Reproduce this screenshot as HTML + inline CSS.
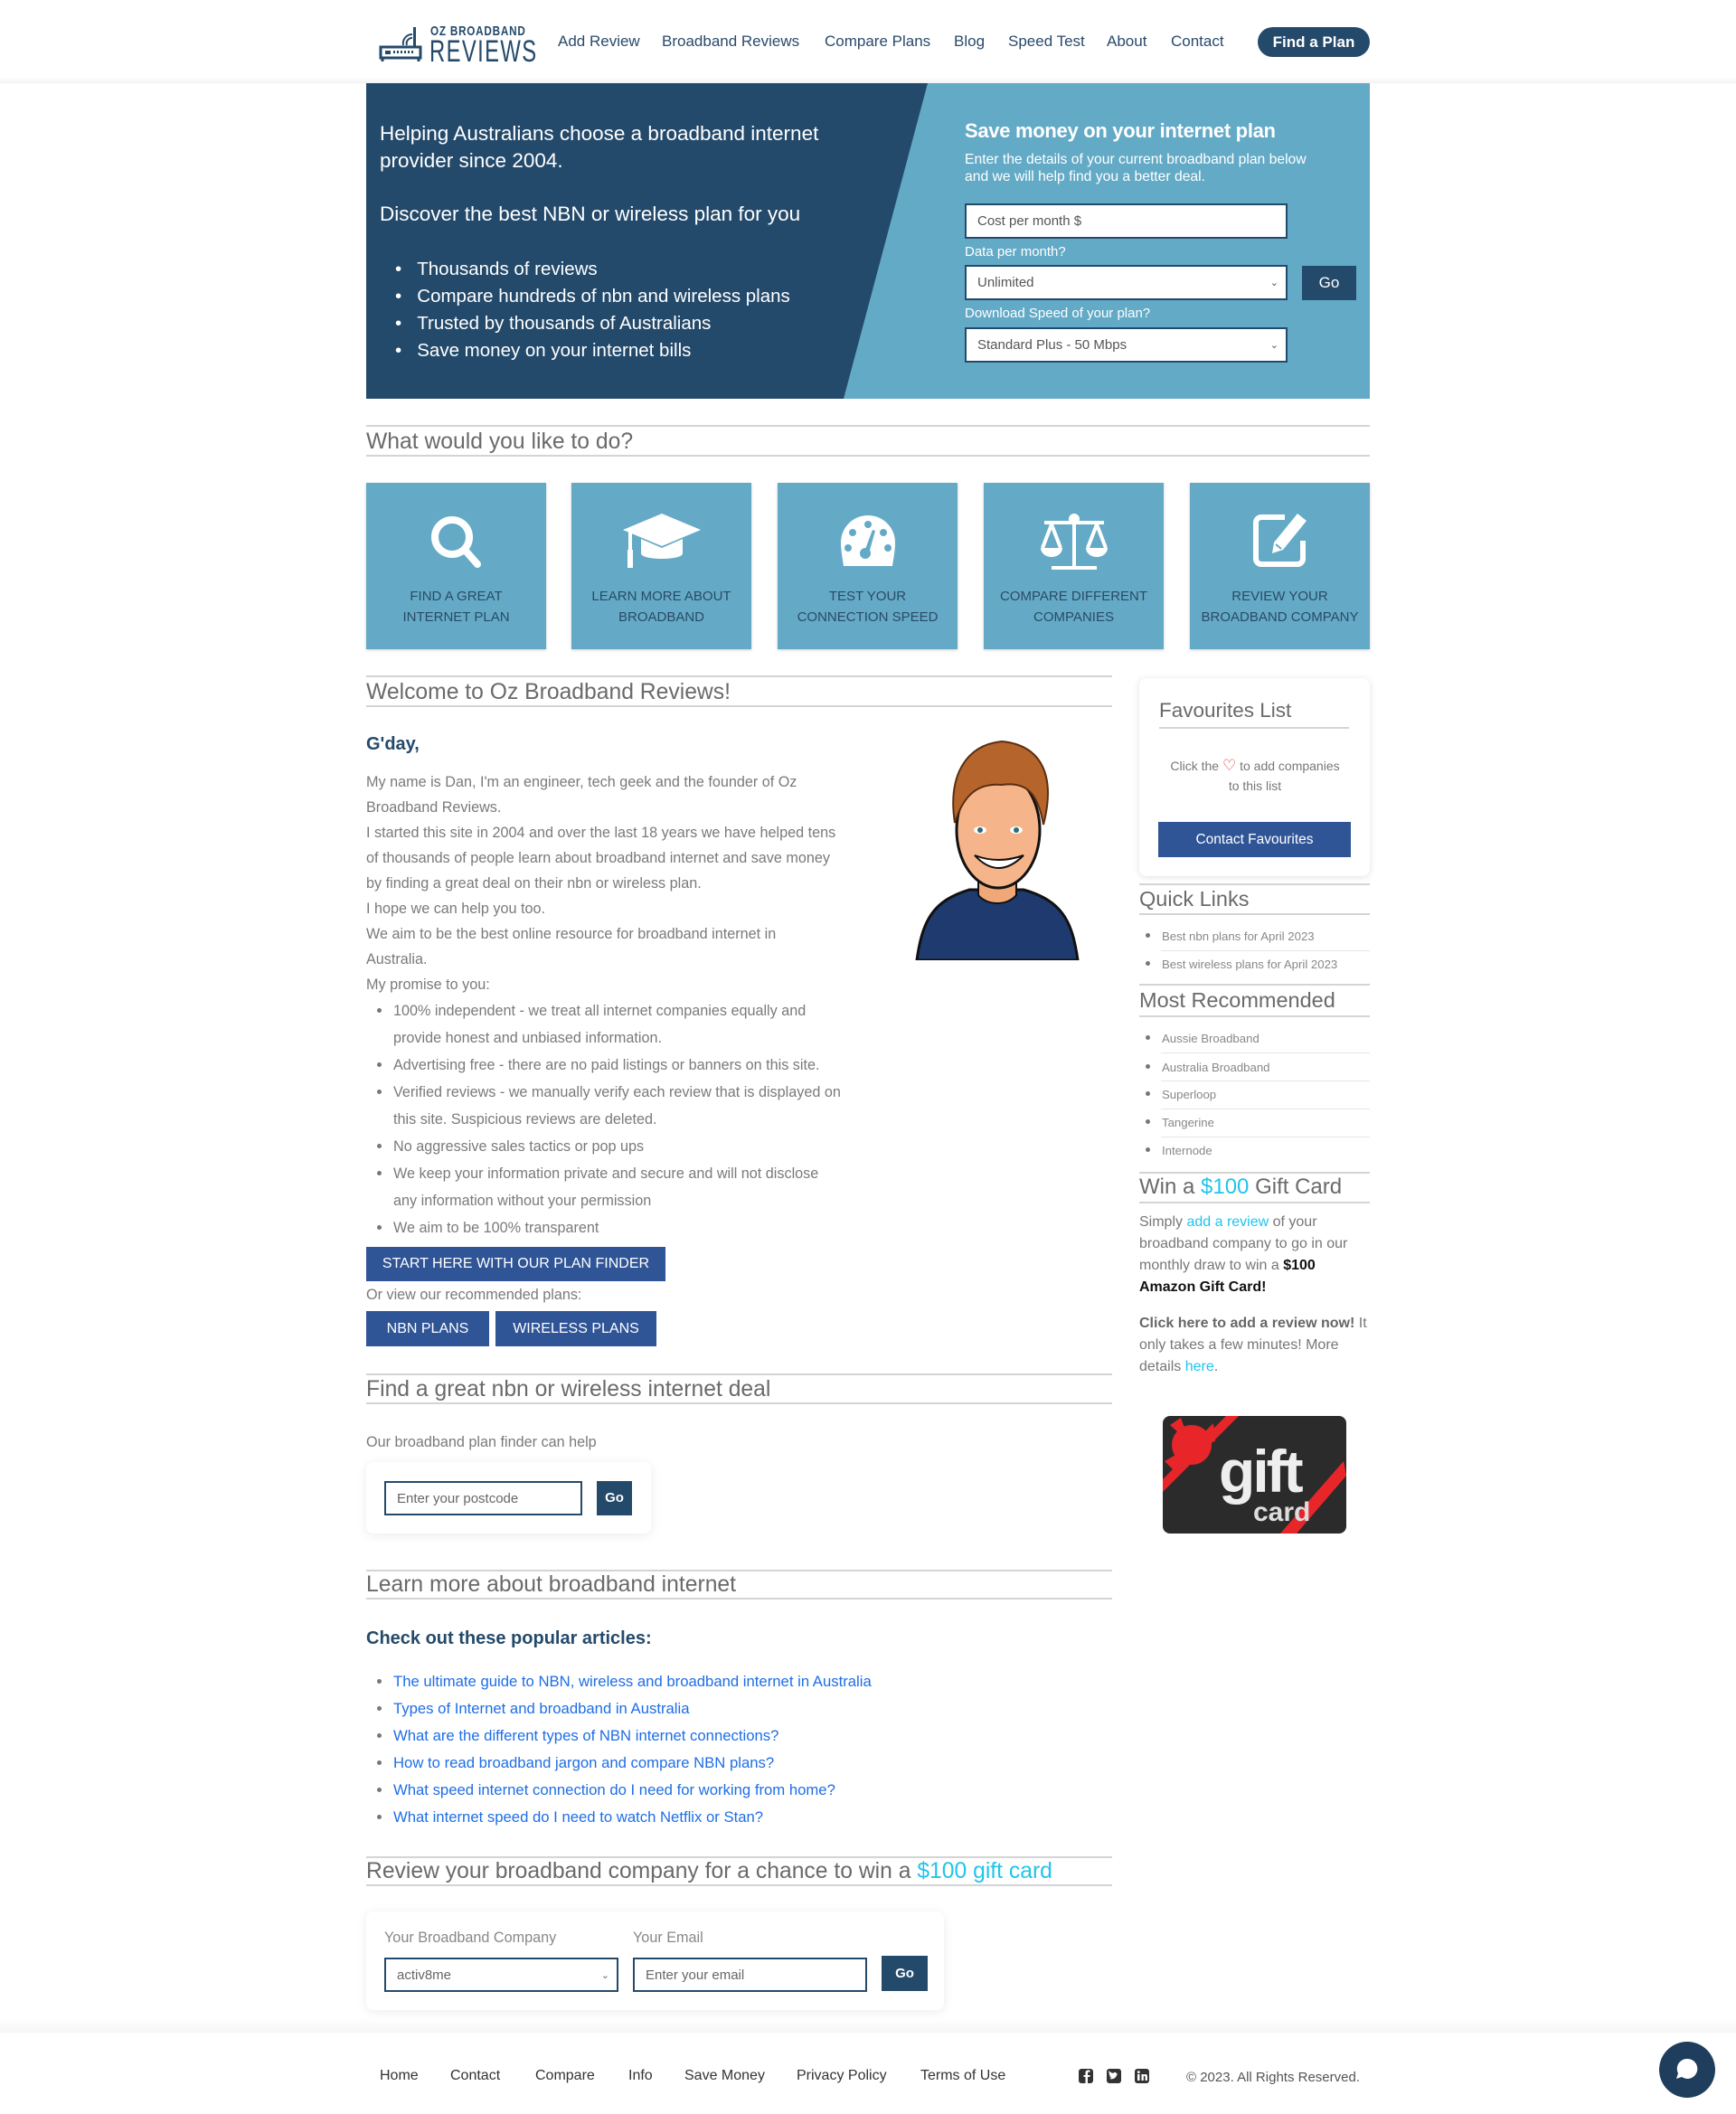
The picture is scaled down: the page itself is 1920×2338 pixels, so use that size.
<!DOCTYPE html>
<html><head><meta charset="utf-8"><style>
*{margin:0;padding:0;box-sizing:border-box}
body{width:1920px;height:2338px;position:relative;background:#fff;font-family:"Liberation Sans",sans-serif;overflow:hidden}
.a{position:absolute;white-space:nowrap}
.nav{font-size:17px;color:#2a4a6b;top:35px;line-height:22px}
.hl{position:absolute;height:2px;background:#d4d4d4}
.h2{position:absolute;font-size:24.7px;color:#6a6a6a;line-height:30px;white-space:nowrap}
.tile{position:absolute;top:534px;width:199px;height:184px;background:#64aac6;box-shadow:0 1px 3px rgba(0,0,0,.2);text-align:center;color:#2a4a66;font-size:15px;line-height:23px}
.tile svg{position:absolute;left:50%;transform:translateX(-50%);top:30px}
.tile div{position:absolute;left:0;right:0;top:114px}
.p{position:absolute;font-size:16.2px;color:#7a7a7a;white-space:nowrap;line-height:20px}
.dot{position:absolute;width:6px;height:6px;border-radius:50%;background:#777}
.btn{position:absolute;background:#2f5597;color:#fff;font-size:16px;text-align:center}
.sb{position:absolute;font-size:13.2px;color:#888;white-space:nowrap;line-height:16px}
.sl{position:absolute;height:1px;background:#e6e6e6;left:1284px;width:231px}
.field{position:absolute;border:3px solid #244a6b;background:#fff;font-size:15px;color:#555;padding-left:12px;display:flex;align-items:center}
.ft{position:absolute;top:2286px;font-size:16px;color:#333;line-height:20px}
</style></head><body>

<!-- NAV -->
<svg class="a" style="left:419px;top:28px" width="50" height="42" viewBox="0 0 50 42">
<rect x="2" y="24" width="44" height="12" fill="none" stroke="#244a6b" stroke-width="3"/>
<rect x="7" y="28" width="6" height="4" fill="#244a6b"/>
<g fill="#244a6b"><rect x="16" y="28" width="2" height="3"/><rect x="20" y="28" width="2" height="3"/><rect x="24" y="28" width="2" height="3"/><rect x="28" y="28" width="2" height="3"/><rect x="32" y="28" width="2" height="3"/><rect x="36" y="28" width="2" height="3"/></g>
<rect x="38" y="2" width="3" height="22" fill="#244a6b"/>
<path d="M31 22 a6 6 0 0 1 6 -8 M27 22 a10 10 0 0 1 10 -12" fill="none" stroke="#244a6b" stroke-width="2"/>
<path d="M4 36 v4 M44 36 v4" stroke="#244a6b" stroke-width="3"/>
</svg>
<div class="a" style="left:476px;top:27px;font-size:15px;font-weight:bold;letter-spacing:1px;color:#244a6b;line-height:16px;transform:scaleX(.78);transform-origin:left">OZ BROADBAND</div>
<div class="a" style="left:475px;top:40px;font-size:34px;letter-spacing:2px;color:#244a6b;line-height:34px;transform:scaleX(.7);transform-origin:left">REVIEWS</div>
<div class="a nav" style="left:617px">Add Review</div>
<div class="a nav" style="left:732px">Broadband Reviews</div>
<div class="a nav" style="left:912px">Compare Plans</div>
<div class="a nav" style="left:1055px">Blog</div>
<div class="a nav" style="left:1115px">Speed Test</div>
<div class="a nav" style="left:1224px">About</div>
<div class="a nav" style="left:1295px">Contact</div>
<div class="a" style="left:1391px;top:30px;width:124px;height:33px;border-radius:17px;background:#244a6b;color:#fff;font-size:17px;font-weight:bold;text-align:center;line-height:33px">Find a Plan</div>
<div class="a" style="left:0;top:86px;width:1920px;height:6px;background:linear-gradient(#fff,#f2f2f2)"></div>

<!-- HERO -->
<svg class="a" style="left:405px;top:92px" width="1110" height="349">
<rect width="1110" height="349" fill="#63aac6"/>
<polygon points="0,0 621,0 528,349 0,349" fill="#244a6b"/>
</svg>
<div class="a" style="left:420px;top:133px;font-size:22.5px;color:#fff;line-height:30px">Helping Australians choose a broadband internet<br>provider since 2004.</div>
<div class="a" style="left:420px;top:223px;font-size:22.5px;color:#fff;line-height:28px">Discover the best NBN or wireless plan for you</div>
<div class="a" style="left:437px;top:283px;font-size:20.5px;color:#fff;line-height:30px">
<div>•&nbsp;&nbsp;&nbsp;Thousands of reviews</div><div>•&nbsp;&nbsp;&nbsp;Compare hundreds of nbn and wireless plans</div><div>•&nbsp;&nbsp;&nbsp;Trusted by thousands of Australians</div><div>•&nbsp;&nbsp;&nbsp;Save money on your internet bills</div></div>
<div class="a" style="left:1067px;top:131px;font-size:22px;font-weight:bold;color:#fff;line-height:28px;letter-spacing:-.3px">Save money on your internet plan</div>
<div class="a" style="left:1067px;top:167px;font-size:15.7px;color:#fff;line-height:19px">Enter the details of your current broadband plan below<br>and we will help find you a better deal.</div>
<div class="field" style="left:1067px;top:225px;width:357px;height:39px;border-width:2px">Cost per month $</div>
<div class="a" style="left:1067px;top:270px;font-size:15px;color:#fff">Data per month?</div>
<div class="field" style="left:1067px;top:293px;width:357px;height:39px;border-width:2px">Unlimited<span style="position:absolute;right:8px;font-size:11px">&#8964;</span></div>
<div class="a" style="left:1440px;top:294px;width:60px;height:38px;background:#244a6b;color:#fff;font-size:17px;text-align:center;line-height:38px">Go</div>
<div class="a" style="left:1067px;top:338px;font-size:15px;color:#fff">Download Speed of your plan?</div>
<div class="field" style="left:1067px;top:362px;width:357px;height:39px;border-width:2px">Standard Plus - 50 Mbps<span style="position:absolute;right:8px;font-size:11px">&#8964;</span></div>

<!-- WHAT WOULD YOU LIKE -->
<div class="hl" style="left:405px;width:1110px;top:470px"></div>
<div class="h2" style="left:405px;top:474px">What would you like to do?</div>
<div class="hl" style="left:405px;width:1110px;top:503px"></div>

<div class="tile" style="left:405px"><svg width="70" height="70" viewBox="0 0 70 70"><circle cx="30" cy="30" r="19" fill="none" stroke="#fff" stroke-width="8"/><path d="M44 44 L58 60" stroke="#fff" stroke-width="8" stroke-linecap="round"/></svg><div>FIND A GREAT<br>INTERNET PLAN</div></div>
<div class="tile" style="left:632px"><svg width="90" height="70" viewBox="0 0 90 70"><polygon points="45,4 88,22 45,40 2,22" fill="#fff"/><path d="M22 32 v16 c0 8 46 8 46 0 v-16 l-23 10 z" fill="#fff"/><path d="M10 24 v30" stroke="#fff" stroke-width="4"/><rect x="7" y="44" width="6" height="20" fill="#fff"/></svg><div>LEARN MORE ABOUT<br>BROADBAND</div></div>
<div class="tile" style="left:860px"><svg width="70" height="70" viewBox="0 0 70 70"><path d="M35 6 a30 30 0 0 1 30 30 c0 10 -2 18 -3 26 h-54 c-1 -8 -3 -16 -3 -26 a30 30 0 0 1 30 -30z" fill="#fff"/><g fill="#64aac6"><circle cx="35" cy="16" r="4"/><circle cx="18" cy="25" r="4"/><circle cx="52" cy="25" r="4"/><circle cx="13" cy="42" r="4"/><circle cx="57" cy="42" r="4"/><circle cx="32" cy="48" r="6"/><path d="M31 46 L40 22 L43 23 L36 48z"/></g></svg><div>TEST YOUR<br>CONNECTION SPEED</div></div>
<div class="tile" style="left:1088px"><svg width="90" height="74" viewBox="0 0 90 74"><g stroke="#fff" stroke-width="4" fill="none"><path d="M45 6 v60 M20 64 h50 M12 14 h66"/><circle cx="45" cy="10" r="4" fill="#fff"/><path d="M20 16 L10 42 M20 16 L30 42 M70 16 L60 42 M70 16 L80 42"/></g><path d="M8 42 h24 a12 10 0 0 1 -24 0z M58 42 h24 a12 10 0 0 1 -24 0z" fill="#fff"/></svg><div>COMPARE DIFFERENT<br>COMPANIES</div></div>
<div class="tile" style="left:1316px"><svg width="70" height="70" viewBox="0 0 70 70"><path d="M40 8 H14 a6 6 0 0 0 -6 6 v40 a6 6 0 0 0 6 6 h40 a6 6 0 0 0 6 -6 V34" fill="none" stroke="#fff" stroke-width="6"/><path d="M54 4 L64 12 L38 44 L26 48 L28 36z" fill="#fff"/><path d="M30 38 l6 5" stroke="#64aac6" stroke-width="2"/></svg><div>REVIEW YOUR<br>BROADBAND COMPANY</div></div>

<!-- WELCOME -->
<div class="hl" style="left:405px;width:825px;top:747px"></div>
<div class="h2" style="left:405px;top:751px">Welcome to Oz Broadband Reviews!</div>
<div class="hl" style="left:405px;width:825px;top:780px"></div>
<div class="a" style="left:405px;top:812px;font-size:20px;font-weight:bold;color:#244a6b">G'day,</div>
<div class="p" style="left:405px;top:851px;line-height:28px">My name is Dan, I'm an engineer, tech geek and the founder of Oz<br>Broadband Reviews.<br>I started this site in 2004 and over the last 18 years we have helped tens<br>of thousands of people learn about broadband internet and save money<br>by finding a great deal on their nbn or wireless plan.<br>I hope we can help you too.<br>We aim to be the best online resource for broadband internet in<br>Australia.<br>My promise to you:</div>
<div class="p" style="left:435px;top:1103px;line-height:30px">100% independent - we treat all internet companies equally and<br>provide honest and unbiased information.<br>Advertising free - there are no paid listings or banners on this site.<br>Verified reviews - we manually verify each review that is displayed on<br>this site. Suspicious reviews are deleted.<br>No aggressive sales tactics or pop ups<br>We keep your information private and secure and will not disclose<br>any information without your permission<br>We aim to be 100% transparent</div>
<div class="dot" style="left:417px;top:1115px;width:5px;height:5px"></div>
<div class="dot" style="left:417px;top:1175px;width:5px;height:5px"></div>
<div class="dot" style="left:417px;top:1205px;width:5px;height:5px"></div>
<div class="dot" style="left:417px;top:1265px;width:5px;height:5px"></div>
<div class="dot" style="left:417px;top:1295px;width:5px;height:5px"></div>
<div class="dot" style="left:417px;top:1355px;width:5px;height:5px"></div>

<!-- avatar -->
<svg class="a" style="left:1012px;top:818px" width="182" height="244" viewBox="0 0 182 244">
<path d="M2 244 C8 200 20 178 60 166 L120 166 C162 178 174 200 180 244z" fill="#1f3a6e" stroke="#111" stroke-width="3"/>
<path d="M70 140 v32 c10 12 32 12 42 0 v-32z" fill="#f0a878" stroke="#111" stroke-width="2"/>
<ellipse cx="92" cy="100" rx="46" ry="64" fill="#f6b48a" stroke="#111" stroke-width="3"/>
<path d="M44 92 C36 40 56 6 96 2 C140 6 156 40 142 94 C136 60 124 46 96 50 C70 48 54 60 44 92z" fill="#b5652c" stroke="#5a2e10" stroke-width="2"/>
<ellipse cx="72" cy="100" rx="7" ry="4" fill="#fff"/><ellipse cx="112" cy="100" rx="7" ry="4" fill="#fff"/>
<circle cx="72" cy="100" r="3" fill="#2b6c7a"/><circle cx="112" cy="100" r="3" fill="#2b6c7a"/>
<path d="M66 128 Q92 156 120 128 Q92 138 66 128z" fill="#fff" stroke="#111" stroke-width="2"/>
</svg>

<div class="btn" style="left:405px;top:1379px;width:331px;height:38px;line-height:38px">START HERE WITH OUR PLAN FINDER</div>
<div class="p" style="left:405px;top:1422px">Or view our recommended plans:</div>
<div class="btn" style="left:405px;top:1450px;width:136px;height:39px;line-height:39px">NBN PLANS</div>
<div class="btn" style="left:548px;top:1450px;width:178px;height:39px;line-height:39px">WIRELESS PLANS</div>

<!-- FIND -->
<div class="hl" style="left:405px;width:825px;top:1519px"></div>
<div class="h2" style="left:405px;top:1522px">Find a great nbn or wireless internet deal</div>
<div class="hl" style="left:405px;width:825px;top:1551px"></div>
<div class="p" style="left:405px;top:1585px">Our broadband plan finder can help</div>
<div class="a" style="left:405px;top:1617px;width:315px;height:79px;border-radius:8px;box-shadow:0 2px 12px rgba(0,0,0,.08);background:#fff"></div>
<div class="field" style="left:425px;top:1638px;width:219px;height:38px;border-width:2px;font-size:15px;color:#666">Enter your postcode</div>
<div class="a" style="left:660px;top:1638px;width:39px;height:38px;background:#244a6b;color:#fff;font-size:15px;font-weight:bold;text-align:center;line-height:38px">Go</div>

<!-- LEARN -->
<div class="hl" style="left:405px;width:825px;top:1736px"></div>
<div class="h2" style="left:405px;top:1738px">Learn more about broadband internet</div>
<div class="hl" style="left:405px;width:825px;top:1767px"></div>
<div class="a" style="left:405px;top:1801px;font-size:20px;font-weight:bold;color:#244a6b">Check out these popular articles:</div>
<div class="p" style="left:435px;top:1845px;line-height:30px;color:#1e6ee6;font-size:16.7px">The ultimate guide to NBN, wireless and broadband internet in Australia<br>Types of Internet and broadband in Australia<br>What are the different types of NBN internet connections?<br>How to read broadband jargon and compare NBN plans?<br>What speed internet connection do I need for working from home?<br>What internet speed do I need to watch Netflix or Stan?</div>
<div class="dot" style="left:417px;top:1857px;width:5px;height:5px"></div>
<div class="dot" style="left:417px;top:1887px;width:5px;height:5px"></div>
<div class="dot" style="left:417px;top:1917px;width:5px;height:5px"></div>
<div class="dot" style="left:417px;top:1947px;width:5px;height:5px"></div>
<div class="dot" style="left:417px;top:1977px;width:5px;height:5px"></div>
<div class="dot" style="left:417px;top:2007px;width:5px;height:5px"></div>

<!-- REVIEW -->
<div class="hl" style="left:405px;width:825px;top:2053px"></div>
<div class="h2" style="left:405px;top:2055px">Review your broadband company for a chance to win a <span style="color:#22c4ec">$100 gift card</span></div>
<div class="hl" style="left:405px;width:825px;top:2084px"></div>
<div class="a" style="left:405px;top:2114px;width:639px;height:109px;border-radius:8px;box-shadow:0 2px 12px rgba(0,0,0,.08);background:#fff"></div>
<div class="p" style="left:425px;top:2133px;color:#888">Your Broadband Company</div>
<div class="p" style="left:700px;top:2133px;color:#888">Your Email</div>
<div class="field" style="left:425px;top:2165px;width:259px;height:38px;border-width:2px;font-size:15px;color:#666">activ8me<span style="position:absolute;right:8px;font-size:11px">&#8964;</span></div>
<div class="field" style="left:700px;top:2165px;width:259px;height:38px;border-width:2px;font-size:15px;color:#666">Enter your email</div>
<div class="a" style="left:975px;top:2163px;width:51px;height:39px;background:#244a6b;color:#fff;font-size:15px;font-weight:bold;text-align:center;line-height:39px">Go</div>

<!-- SIDEBAR -->
<div class="a" style="left:1260px;top:750px;width:255px;height:219px;border-radius:8px;box-shadow:0 1px 8px rgba(0,0,0,.12);background:#fff"></div>
<div class="a" style="left:1282px;top:773px;font-size:22.5px;color:#6a6a6a">Favourites List</div>
<div class="a" style="left:1282px;top:804px;width:210px;height:2px;background:#d4d4d4"></div>
<div class="a" style="left:1278px;top:836px;width:220px;font-size:14px;color:#777;text-align:center;line-height:22px">Click the <span style="color:#e53a3a;font-size:17px">♡</span> to add companies<br>to this list</div>
<div class="btn" style="left:1281px;top:909px;width:213px;height:39px;line-height:39px;font-size:15.5px">Contact Favourites</div>

<div class="hl" style="left:1260px;width:255px;top:977px"></div>
<div class="a" style="left:1260px;top:981px;font-size:23.5px;color:#6a6a6a">Quick Links</div>
<div class="hl" style="left:1260px;width:255px;top:1010px"></div>
<div class="dot" style="left:1267px;top:1032px;width:5px;height:5px"></div><div class="sb" style="left:1285px;top:1028px">Best nbn plans for April 2023</div>
<div class="sl" style="top:1051px"></div>
<div class="dot" style="left:1267px;top:1063px;width:5px;height:5px"></div><div class="sb" style="left:1285px;top:1059px">Best wireless plans for April 2023</div>

<div class="hl" style="left:1260px;width:255px;top:1088px"></div>
<div class="a" style="left:1260px;top:1093px;font-size:23.5px;color:#6a6a6a">Most Recommended</div>
<div class="hl" style="left:1260px;width:255px;top:1123px"></div>
<div class="dot" style="left:1267px;top:1145px;width:5px;height:5px"></div><div class="sb" style="left:1285px;top:1141px">Aussie Broadband</div>
<div class="sl" style="top:1164px"></div>
<div class="dot" style="left:1267px;top:1177px;width:5px;height:5px"></div><div class="sb" style="left:1285px;top:1173px">Australia Broadband</div>
<div class="sl" style="top:1195px"></div>
<div class="dot" style="left:1267px;top:1207px;width:5px;height:5px"></div><div class="sb" style="left:1285px;top:1203px">Superloop</div>
<div class="sl" style="top:1226px"></div>
<div class="dot" style="left:1267px;top:1238px;width:5px;height:5px"></div><div class="sb" style="left:1285px;top:1234px">Tangerine</div>
<div class="sl" style="top:1257px"></div>
<div class="dot" style="left:1267px;top:1269px;width:5px;height:5px"></div><div class="sb" style="left:1285px;top:1265px">Internode</div>

<div class="hl" style="left:1260px;width:255px;top:1296px"></div>
<div class="a" style="left:1260px;top:1299px;font-size:24px;color:#6a6a6a">Win a <span style="color:#22c4ec">$100</span> Gift Card</div>
<div class="hl" style="left:1260px;width:255px;top:1329px"></div>
<div class="a" style="left:1260px;top:1340px;font-size:16px;color:#777;line-height:24px">Simply <b style="color:#22c4ec;font-weight:normal">add a review</b> of your<br>broadband company to go in our<br>monthly draw to win a <b style="color:#111">$100</b><br><b style="color:#111">Amazon Gift Card!</b></div>
<div class="a" style="left:1260px;top:1452px;font-size:16px;color:#777;line-height:24px"><b style="color:#666">Click here to add a review now!</b> It<br>only takes a few minutes! More<br>details <span style="color:#22c4ec">here</span>.</div>

<svg class="a" style="left:1286px;top:1566px" width="203" height="130" viewBox="0 0 203 130">
<defs><clipPath id="c"><rect width="203" height="130" rx="8"/></clipPath></defs>
<g clip-path="url(#c)"><rect width="203" height="130" fill="#2b2b2b"/>
<path d="M0 70 L70 0 L84 0 L0 84z M200 50 L130 130 L148 130 L203 66z" fill="#e8262a"/>
<g fill="#e8262a"><circle cx="32" cy="32" r="22"/><path d="M8 10 L30 30 L20 2z M56 8 L34 30 L58 28z M2 50 L30 34 L14 62z"/></g>
<text x="62" y="84" font-family="Liberation Sans" font-weight="bold" font-size="66" fill="#eee" letter-spacing="-3">gift</text>
<text x="100" y="116" font-family="Liberation Sans" font-weight="bold" font-size="30" fill="#ddd">card</text></g>
</svg>

<!-- FOOTER -->
<div class="a" style="left:0;top:2232px;width:1920px;height:16px;background:linear-gradient(#fff,#f6f6f6)"></div>
<div class="ft" style="left:420px">Home</div>
<div class="ft" style="left:498px">Contact</div>
<div class="ft" style="left:592px">Compare</div>
<div class="ft" style="left:695px">Info</div>
<div class="ft" style="left:757px">Save Money</div>
<div class="ft" style="left:881px">Privacy Policy</div>
<div class="ft" style="left:1018px">Terms of Use</div>
<svg class="a" style="left:1192px;top:2287px" width="80" height="18" viewBox="0 0 80 18">
<rect x="1" y="1" width="16" height="16" rx="3" fill="#333"/><path d="M11 17 v-7 h2.5 v-2 h-2.5 v-2 c0-1 .5-1.5 1.5-1.5 h1 v-2 h-2 c-2 0-3 1.2-3 3 v2.5 h-2 v2 h2 v7z" fill="#fff"/>
<rect x="32" y="1" width="16" height="16" rx="3" fill="#333"/><path d="M35 12 c3 1 7 0 8-4 l1.5-1.5 -1.5 .3 c0-2-2.5-2.5-3.5-1 c-2 0-3.5-1-5-2.5 c-.5 1.5 0 3 1 3.5 -1 0-1 0-1-.3 0 1.3 1 2.3 2 2.600 -.6.2-1 .1-1.4 0 .4 1 1.3 1.7 2.4 1.7 -1 .9-2.5 1.3-3.5 1.2z" fill="#fff"/>
<rect x="63" y="1" width="16" height="16" rx="3" fill="#333"/><rect x="66" y="7" width="2.5" height="7" fill="#fff"/><circle cx="67.3" cy="4.6" r="1.4" fill="#fff"/><path d="M70.5 7 h2.3 v1 c.8-1.5 4.200-1.6 4.200 1.300 v4.700 h-2.400 v-4 c0-1.500-1.800-1.500-1.800 0 v4 h-2.300z" fill="#fff"/>
</svg>
<div class="a" style="left:1312px;top:2289px;font-size:15px;color:#555">© 2023. All Rights Reserved.</div>
<svg class="a" style="left:1835px;top:2258px" width="62" height="62" viewBox="0 0 62 62"><circle cx="31" cy="31" r="31" fill="#1f3d5c"/><path d="M31 19 a11 11 0 1 1 -6 20 l-6 2 2-6 a11 11 0 0 1 10 -16z" fill="#fff"/></svg>
</body></html>
